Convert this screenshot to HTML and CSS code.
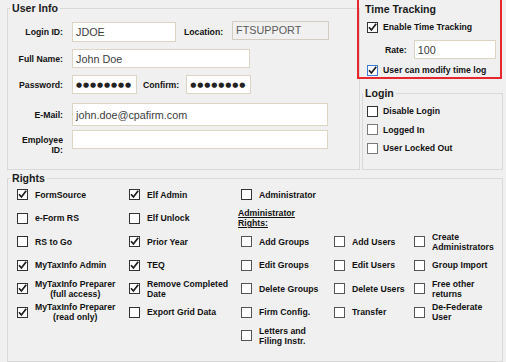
FILE: index.html
```html
<!DOCTYPE html>
<html lang="en">
<head>
    <meta charset="UTF-8">
    <title>User Settings</title>
    <link rel="stylesheet" href="styles.css">
</head>
<body>
<div class="window">
    <div class="top">
        <fieldset class="group user-info">
            <legend>User Info</legend>
            <div class="row r1">
                <span class="lbl">Login ID:</span>
                <div class="field w-login">JDOE</div>
                <span class="lbl-inline loc">Location:</span>
                <div class="field disabled w-loc">FTSUPPORT</div>
            </div>
            <div class="row r2">
                <span class="lbl">Full Name:</span>
                <div class="field w-name">John Doe</div>
            </div>
            <div class="row r3">
                <span class="lbl">Password:</span>
                <div class="field w-pass"><span class="dots">●●●●●●●●</span></div>
                <span class="lbl-inline confirm">Confirm:</span>
                <div class="field w-pass"><span class="dots">●●●●●●●●</span></div>
            </div>
            <div class="row r4">
                <span class="lbl">E-Mail:</span>
                <div class="field w-wide">john.doe@cpafirm.com</div>
            </div>
            <div class="row r5">
                <span class="lbl two-line">Employee<br>ID:</span>
                <div class="field w-wide"></div>
            </div>
        </fieldset>

        <div class="side">
            <div class="time-box">
                <div class="title">Time Tracking</div>
                <div class="opt first">
                    <span class="cb"><svg viewBox="0 0 9 9"><path d="M1 4.2 L3.4 7 L8.2 0.8"/></svg></span>
                    <span class="txt">Enable Time Tracking</span>
                </div>
                <div class="rate-row">
                    <span class="rate-lbl">Rate:</span>
                    <div class="field w-rate">100</div>
                </div>
                <div class="opt">
                    <span class="cb focus"><svg viewBox="0 0 9 9"><path d="M1 4.2 L3.4 7 L8.2 0.8"/></svg></span>
                    <span class="txt">User can modify time log</span>
                </div>
            </div>

            <fieldset class="group login">
                <legend>Login</legend>
                <div class="opt first"><span class="cb"></span><span class="txt">Disable Login</span></div>
                <div class="opt"><span class="cb light"></span><span class="txt">Logged In</span></div>
                <div class="opt"><span class="cb light"></span><span class="txt">User Locked Out</span></div>
            </fieldset>
        </div>
    </div>

    <fieldset class="group rights">
        <legend>Rights</legend>
        <div class="rights-grid">
            <!-- row 1 -->
            <div class="cell"><span class="cb"><svg viewBox="0 0 9 9"><path d="M1 4.2 L3.4 7 L8.2 0.8"/></svg></span><span class="txt">FormSource</span></div>
            <div class="cell"><span class="cb"><svg viewBox="0 0 9 9"><path d="M1 4.2 L3.4 7 L8.2 0.8"/></svg></span><span class="txt">Elf Admin</span></div>
            <div class="cell"><span class="cb"></span><span class="txt">Administrator</span></div>
            <div></div>
            <div></div>
            <!-- row 2 -->
            <div class="cell"><span class="cb"></span><span class="txt">e-Form RS</span></div>
            <div class="cell"><span class="cb"></span><span class="txt">Elf Unlock</span></div>
            <div class="cell"><span class="txt heading">Administrator<br>Rights:</span></div>
            <div></div>
            <div></div>
            <!-- row 3 -->
            <div class="cell"><span class="cb"></span><span class="txt">RS to Go</span></div>
            <div class="cell"><span class="cb"><svg viewBox="0 0 9 9"><path d="M1 4.2 L3.4 7 L8.2 0.8"/></svg></span><span class="txt">Prior Year</span></div>
            <div class="cell"><span class="cb gray"></span><span class="txt">Add Groups</span></div>
            <div class="cell"><span class="cb gray"></span><span class="txt">Add Users</span></div>
            <div class="cell"><span class="cb gray"></span><span class="txt">Create<br>Administrators</span></div>
            <!-- row 4 -->
            <div class="cell"><span class="cb"><svg viewBox="0 0 9 9"><path d="M1 4.2 L3.4 7 L8.2 0.8"/></svg></span><span class="txt">MyTaxInfo Admin</span></div>
            <div class="cell"><span class="cb"><svg viewBox="0 0 9 9"><path d="M1 4.2 L3.4 7 L8.2 0.8"/></svg></span><span class="txt">TEQ</span></div>
            <div class="cell"><span class="cb gray"></span><span class="txt">Edit Groups</span></div>
            <div class="cell"><span class="cb gray"></span><span class="txt">Edit Users</span></div>
            <div class="cell"><span class="cb gray"></span><span class="txt">Group Import</span></div>
            <!-- row 5 -->
            <div class="cell"><span class="cb"><svg viewBox="0 0 9 9"><path d="M1 4.2 L3.4 7 L8.2 0.8"/></svg></span><span class="txt center">MyTaxInfo Preparer<br>(full access)</span></div>
            <div class="cell"><span class="cb"><svg viewBox="0 0 9 9"><path d="M1 4.2 L3.4 7 L8.2 0.8"/></svg></span><span class="txt">Remove Completed<br>Date</span></div>
            <div class="cell"><span class="cb gray"></span><span class="txt">Delete Groups</span></div>
            <div class="cell"><span class="cb gray"></span><span class="txt">Delete Users</span></div>
            <div class="cell"><span class="cb gray"></span><span class="txt">Free other<br>returns</span></div>
            <!-- row 6 -->
            <div class="cell"><span class="cb"><svg viewBox="0 0 9 9"><path d="M1 4.2 L3.4 7 L8.2 0.8"/></svg></span><span class="txt center">MyTaxInfo Preparer<br>(read only)</span></div>
            <div class="cell"><span class="cb"></span><span class="txt">Export Grid Data</span></div>
            <div class="cell"><span class="cb gray"></span><span class="txt">Firm Config.</span></div>
            <div class="cell"><span class="cb gray"></span><span class="txt">Transfer</span></div>
            <div class="cell"><span class="cb gray"></span><span class="txt">De-Federate<br>User</span></div>
            <!-- row 7 -->
            <div></div>
            <div></div>
            <div class="cell"><span class="cb gray"></span><span class="txt">Letters and<br>Filing Instr.</span></div>
        </div>
    </fieldset>
</div>
</body>
</html>
```

FILE: styles.css
```css
* {
    margin: 0;
    padding: 0;
    box-sizing: border-box;
}

body {
    width: 506px;
    height: 362px;
    overflow: hidden;
    background: #f0f0f0;
    font-family: 'Liberation Sans', Arial, sans-serif;
    color: #111;
}

.window {
    padding-left: 7px;
}

.top {
    display: flex;
    height: 170px;
}

/* group boxes */
fieldset.group {
    border: 1px solid #d9d9d9;
    min-width: 0;
}

legend {
    font-size: 10.6px;
    font-weight: bold;
    line-height: 16px;
    color: #1b1b1b;
    padding: 0 2px;
}

.user-info {
    width: 353px;
    height: 170px;
}

.user-info legend,
.rights legend {
    margin-left: 2px;
}

/* user info form */
.row {
    display: flex;
    align-items: center;
}

.r1 { margin-top: 6px; height: 20px; }
.r2 { margin-top: 7px; height: 19px; }
.r3 { margin-top: 7px; height: 19px; }
.r4 { margin-top: 9px; height: 23px; }
.r5 { margin-top: 4px; height: 19px; align-items: flex-start; }

.lbl {
    width: 55px;
    margin-right: 9px;
    text-align: right;
    font-size: 8.7px;
    font-weight: bold;
}

.lbl.two-line {
    line-height: 10px;
    margin-top: 5px;
}

.lbl-inline {
    font-size: 8.7px;
    font-weight: bold;
}

.loc {
    margin-left: 8px;
    margin-right: 9px;
}

.confirm {
    margin-left: 6px;
    margin-right: 7px;
}

.field {
    display: flex;
    align-items: center;
    height: 100%;
    padding-left: 3px;
    border: 1px solid #ddd5c4;
    background: #fff;
    font-size: 10.8px;
    color: #3c3c3c;
}

.field.disabled {
    background: #f0f0f0;
    border-color: #d3cdc1;
    color: #5a5a5a;
    height: 19px;
    align-self: flex-start;
    margin-top: -1px;
    align-items: flex-start;
    padding-top: 2px;
}

.w-login { width: 104px; }
.w-loc { width: 97px; }
.w-name { width: 178px; }
.w-pass { width: 65px; }
.w-wide { width: 256px; }

.dots {
    font-family: 'DejaVu Sans', sans-serif;
    font-size: 7px;
    letter-spacing: 0.9px;
    color: #222;
}

/* right column */
.side {
    display: flex;
    flex-direction: column;
    width: 143px;
}

.time-box {
    width: 145px;
    height: 81px;
    margin: -2px 0 0 -3px;
    border: 2px solid #e8262b;
    padding-left: 6px;
}

.time-box .title {
    font-size: 10.6px;
    font-weight: bold;
    line-height: 16px;
    color: #1b1b1b;
    margin-top: 1px;
}

.opt {
    display: flex;
    align-items: center;
    height: 18px;
    padding-left: 2px;
}

.time-box .opt {
    margin-top: 2px;
}

.time-box .opt.first {
    margin-top: 1px;
}

.rate-row {
    display: flex;
    align-items: center;
    height: 19px;
    margin-top: 4px;
    padding-left: 20px;
}

.rate-lbl {
    font-size: 8.7px;
    font-weight: bold;
    margin-right: 7px;
}

.w-rate {
    width: 82px;
}

.txt {
    font-size: 8.7px;
    font-weight: bold;
    line-height: 10px;
    margin-left: 5px;
}

.login {
    flex: 1;
    margin: 6px 0 0 2px;
    width: 141px;
}

.login legend {
    margin-left: 0;
}

.login .opt {
    height: 18.5px;
    padding-left: 4px;
}

.login .opt.first {
    margin-top: 1px;
}

/* checkboxes */
.cb {
    display: flex;
    flex: none;
    width: 11px;
    height: 11px;
    border: 1px solid #333;
    background: #fff;
}

.cb.light {
    border-color: #7a7a7a;
}

.cb.gray {
    border-color: #555;
}

.cb.focus {
    border-color: #3d7bd4;
}

.cb svg {
    width: 9px;
    height: 9px;
    fill: none;
    stroke: #1a1a1a;
    stroke-width: 1.7;
}

/* rights */
.rights {
    width: 496px;
    height: 192px;
}

.rights-grid {
    display: grid;
    grid-template-columns: 112px 112px 93px 80px 1fr;
    grid-auto-rows: 23.5px;
    margin-top: -3px;
    padding-left: 9px;
}

.cell {
    display: flex;
    align-items: center;
}

.cell .txt {
    margin-left: 7px;
}

.txt.center {
    text-align: center;
}

.txt.heading {
    margin-left: -3px;
    text-decoration: underline;
}
```
